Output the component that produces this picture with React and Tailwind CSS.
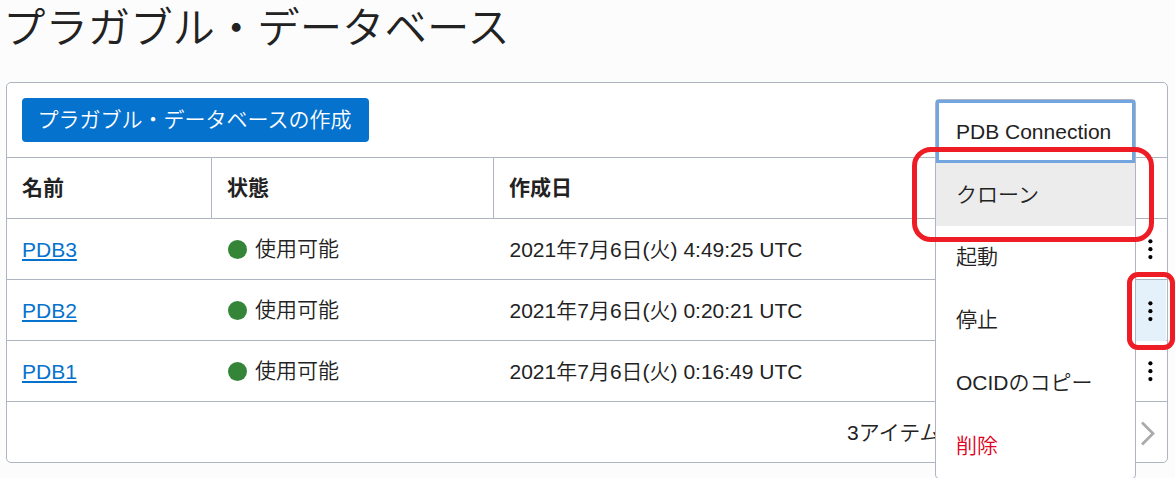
const rows = [
  { name: "PDB3", created: "2021年7月6日(火) 4:49:25 UTC" },
  { name: "PDB2", created: "2021年7月6日(火) 0:20:21 UTC", active: true },
  { name: "PDB1", created: "2021年7月6日(火) 0:16:49 UTC" },
];

function Kebab() {
  return (
    <svg width="6" height="22" viewBox="0 0 6 22" fill="#000" aria-hidden="true">
      <circle cx="3.4" cy="3.3" r="2.1" />
      <circle cx="3.4" cy="11.2" r="2.1" />
      <circle cx="3.4" cy="19.1" r="2.1" />
    </svg>
  );
}

function Row({ name, created, active }) {
  return (
    <div className="flex h-[61px] items-center border-b border-[#aeb5c0]">
      <div className="w-[205px] pt-[2px] pl-[15px]">
        <a href="#" className="text-[#0572ce] underline decoration-2 underline-offset-[2px]">{name}</a>
      </div>
      <div className="flex w-[282px] items-center gap-2 pl-4">
        <span className="size-[19px] rounded-full bg-[#358539]" />
        <span>{"使用可能"}</span>
      </div>
      <div className="grow pt-px pl-[15.5px]">{created}</div>
      <div className={active ? "mr-px -mb-px flex h-[61px] w-[32px] items-center justify-center bg-[#e4f1fb]" : "mr-px flex h-full w-[32px] items-center justify-center"}>
        <Kebab />
      </div>
    </div>
  );
}

function Menu() {
  return (
    <div className="absolute top-[99px] left-[935px] flex w-[201px] flex-col rounded-[4px] border border-[#aeb5c0] bg-white">
      <div className="flex h-[63px] items-center border-[3px] border-[#73a5e0] pl-[17px]">PDB Connection</div>
      <div className="flex h-[63px] items-center bg-[#ececec] pl-5">クローン</div>
      <div className="flex h-[63px] items-center pb-[2px] pl-5">起動</div>
      <div className="flex h-[63px] items-center pb-[2px] pl-5">停止</div>
      <div className="flex h-[63px] items-center pb-px pl-5">OCIDのコピー</div>
      <div className="flex h-[63px] items-center pb-[2px] pl-5 text-[#e00020]">削除</div>
    </div>
  );
}

export default function App() {
  return (
    <div className="relative h-[478px] w-[1175px] overflow-hidden bg-[#fcfcfc] font-['Liberation_Sans','Noto_Sans_CJK_JP',sans-serif] text-[21px] leading-[30px] font-[350] whitespace-nowrap text-[#222]">
      <h1 className="h-[82px] pt-[2px] pl-[3px] text-[42.4px] leading-[54px]">プラガブル・データベース</h1>
      <div className="ml-[6px] flex w-[1162px] flex-col rounded-[5px] border border-[#aeb5c0] bg-white">
        <div className="flex h-[75px] items-center border-b border-[#aeb5c0] pl-[15px]">
          <button className="h-[44px] w-[347px] rounded-[4px] bg-[#0572ce] pr-[2px] text-white">プラガブル・データベースの作成</button>
        </div>
        <div className="flex h-[61px] border-b border-[#aeb5c0] leading-[60px] font-bold">
          <div className="w-[205px] border-r border-[#aeb5c0] pl-[15px]">名前</div>
          <div className="w-[282px] border-r border-[#aeb5c0] pl-[15px]">状態</div>
          <div className="pl-[15px]">作成日</div>
        </div>
        {rows.map((row) => (
          <Row key={row.name} {...row} />
        ))}
        <div className="flex h-[60px] items-center justify-between pt-[2px] pr-3 pl-[840px]">
          <span>3アイテム</span>
          <svg width="15" height="26" viewBox="0 0 15 26" fill="none" stroke="#aaa" strokeWidth="2.7" aria-hidden="true">
            <path d="M2 2.5 L13 13.5 L2 24.5" />
          </svg>
        </div>
      </div>
      <Menu />
      <div className="absolute top-[147px] left-[912px] h-[95px] w-[242px] rounded-[19px] border-[5px] border-[#ee1c24]" />
      <div className="absolute top-[272px] left-[1127px] h-[78px] w-[48px] rounded-[11px] border-[5px] border-[#ee1c24]" />
    </div>
  );
}
